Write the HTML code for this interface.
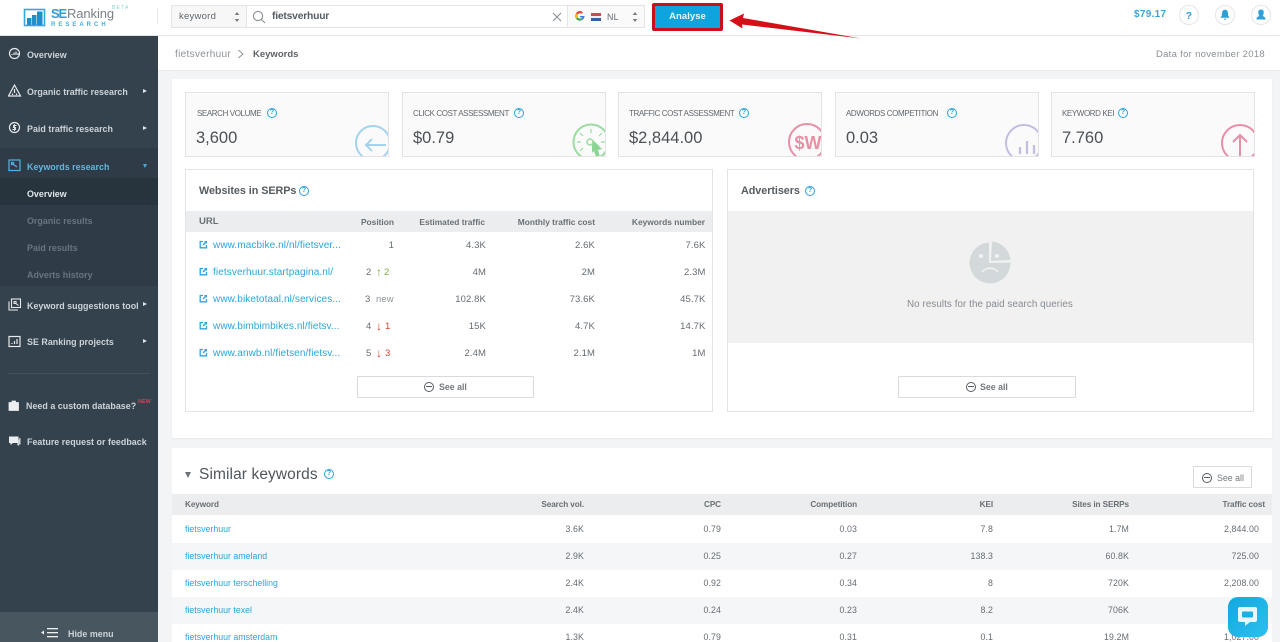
<!DOCTYPE html>
<html><head><meta charset="utf-8"><title>SE Ranking Research</title>
<style>
*{box-sizing:border-box}
html,body{margin:0;padding:0;width:1280px;height:642px;overflow:hidden;background:#f3f4f6;font-family:"Liberation Sans",sans-serif;color:#5a6268}
body{filter:blur(.3px)}
.a{position:absolute}
.t{position:absolute;white-space:nowrap;line-height:14px;letter-spacing:.25px;transform:translateY(1px)}
.r{text-align:right}
.side{left:0;top:36px;width:158px;height:606px;background:#34424e}
.n{font-size:8.9px;font-weight:bold;color:#cdd3d7;letter-spacing:.03px}
.sub{font-size:8.9px;font-weight:bold;color:#68757e;letter-spacing:.03px}
.tri{position:absolute;width:0;height:0;border-left:4px solid #dfe3e6;border-top:2.5px solid transparent;border-bottom:2.5px solid transparent;left:143px}
.card{position:absolute;top:92px;width:204px;height:65px;background:#fafafa;border:1px solid #e1e3e5;overflow:hidden}
.lab{font-size:8px;color:#62686e;letter-spacing:-.4px;left:10px;top:13px}
.val{font-size:16.5px;color:#4a5157;left:10px;top:37px;line-height:16px;letter-spacing:0;transform:none}
.q{position:absolute;width:10px;height:10px;border:1.2px solid #2aa3dc;border-radius:50%;color:#2aa3dc;font-size:7px;line-height:8px;text-align:center;font-weight:bold}
.panel{position:absolute;top:169px;height:243px;background:#fff;border:1px solid #e1e3e5}
.h{font-size:10.8px;color:#555c62;font-weight:bold;letter-spacing:-.05px;transform:none}
.th{font-size:8.4px;font-weight:bold;color:#697075;letter-spacing:0}
.th2{font-size:8.2px;font-weight:bold;color:#697075;letter-spacing:-.1px;transform:none}
.td{font-size:9.5px;color:#666d73;letter-spacing:.1px}
.ar{font-size:12px;font-weight:bold;letter-spacing:0}
.l{font-size:10px;color:#2aa6dc;letter-spacing:.1px}
.k{font-size:8.8px;color:#2aa6dc;letter-spacing:0;transform:none}
.c{font-size:8.8px;color:#666d73;letter-spacing:.1px;transform:none}
.btn{position:absolute;background:#fff;border:1px solid #d8dadc;border-radius:1px}
.see{font-size:8.8px;font-weight:bold;color:#73797e;letter-spacing:0;transform:none}
.min{position:absolute;width:10px;height:10px;border:1.3px solid #555c62;border-radius:50%}
.min:after{content:"";position:absolute;left:1px;right:1px;top:3px;height:1.3px;background:#555c62}
.ext{position:absolute;width:9px;height:9px}
</style></head><body>

<!-- header -->
<div class="a" style="left:0;top:0;width:1280px;height:36px;background:#fff;border-bottom:1px solid #e4e6e8"></div>
<svg class="a" style="left:23px;top:8px" width="24" height="20" viewBox="0 0 24 20"><rect x="1.5" y="1.5" width="20" height="16" fill="#fff" stroke="#35a7df" stroke-width="1.6"/><rect x="4" y="10" width="4.5" height="7" fill="#1f8fcb"/><rect x="9" y="7" width="4.5" height="10" fill="#1f8fcb"/><rect x="14" y="3.5" width="5.5" height="13.5" fill="#1f8fcb"/></svg>
<div class="t" style="left:51px;top:6px;font-size:13px;font-weight:bold;color:#2d9dd6;letter-spacing:-1.2px">SE</div>
<div class="t" style="left:67px;top:6px;font-size:13px;color:#7b8187;letter-spacing:-.1px">Ranking</div>
<div class="t" style="left:51px;top:16.5px;font-size:6px;font-weight:bold;color:#3fb0e2;letter-spacing:3px">RESEARCH</div>
<div class="t" style="left:112px;top:0;font-size:5px;color:#7fd7d2;letter-spacing:1.2px">BETA</div>
<div class="a" style="left:157px;top:8px;width:1px;height:16px;background:#e8e9ea"></div>

<div class="a" style="left:171px;top:5px;width:76px;height:23px;background:#f7f7f7;border:1px solid #e3e4e5"></div>
<div class="t" style="left:179px;top:9px;font-size:9.5px;color:#5f666c">keyword</div>
<svg class="a" style="left:234px;top:12px" width="6" height="10"><path d="M3 0L5.2 3H.8zM3 10L.8 7H5.2z" fill="#72787d"/></svg>
<div class="a" style="left:246px;top:5px;width:322px;height:23px;background:#fff;border:1px solid #e3e4e5"></div>
<svg class="a" style="left:252px;top:10px" width="14" height="14" fill="none" stroke="#8a9096" stroke-width="1.1"><circle cx="6" cy="6" r="4.6"/><path d="M9.4 9.4L13 13"/></svg>
<div class="t" style="left:272px;top:9px;font-size:10.3px;color:#555b61;font-weight:bold;letter-spacing:-.2px">fietsverhuur</div>
<svg class="a" style="left:552px;top:12px" width="10" height="10" stroke="#8a8f94" stroke-width="1.1"><path d="M1 1L9 9M9 1L1 9"/></svg>
<div class="a" style="left:567px;top:5px;width:78px;height:23px;background:#fafafa;border:1px solid #e3e4e5"></div>
<svg class="a" style="left:575px;top:11px" width="10" height="10"><path d="M5 5H9.500A4.600 4.600 0 0 1 7.800 8.600L6 7A2.500 2.500 0 0 0 7 6.300H5z" fill="#3f80ee"/><path d="M1 2.2A4.4 4.4 0 0 1 8 1.4L6.6 2.8A2.5 2.5 0 0 0 2.8 3.6z" fill="#e6483b"/><path d="M1 2.2L2.8 3.6V6.4L1 7.8A4.6 4.6 0 0 1 1 2.2z" fill="#f4b71e"/><path d="M1 7.8L2.8 6.4A2.5 2.5 0 0 0 6 7.3L7.6 8.6A4.5 4.5 0 0 1 1 7.8z" fill="#3aa757"/></svg>
<div class="a" style="left:591px;top:13px;width:10px;height:2.6px;background:#d0494f"></div>
<div class="a" style="left:591px;top:15.6px;width:10px;height:2.6px;background:#eef0f2"></div>
<div class="a" style="left:591px;top:18.2px;width:10px;height:2.6px;background:#3d5da4"></div>
<div class="t" style="left:607px;top:9px;font-size:8.8px;color:#62686e">NL</div>
<svg class="a" style="left:632px;top:12px" width="6" height="10"><path d="M3 0L5.2 3H.8zM3 10L.8 7H5.2z" fill="#72787d"/></svg>

<div class="a" style="left:652px;top:3px;width:71px;height:28px;background:#cb0e1a;border-radius:2px"></div>
<div class="a" style="left:655px;top:6px;width:65px;height:22px;background:#0ea5df"></div>
<div class="t" style="left:655px;top:9px;width:65px;text-align:center;font-size:9.5px;font-weight:bold;color:#e9f7fd;letter-spacing:.05px">Analyse</div>

<div class="t" style="left:1134px;top:7px;font-size:10px;font-weight:bold;color:#35a5dc;letter-spacing:.3px">$79.17</div>
<div class="a" style="left:1179px;top:5px;width:20px;height:20px;border:1px solid #e3e5e7;border-radius:50%"></div>
<div class="t" style="left:1179px;top:8px;width:20px;text-align:center;font-size:10.5px;font-weight:bold;color:#2d9fd9">?</div>
<div class="a" style="left:1215px;top:5px;width:20px;height:20px;border:1px solid #e3e5e7;border-radius:50%"></div>
<svg class="a" style="left:1220px;top:9px" width="10" height="12"><path d="M5 .8C7.500 .8 8 3 8 5C8 7 9 8 9.500 8.800H.5C1 8 2 7 2 5C2 3 2.500 .8 5 .8zM3.800 9.600H6.200A1.200 1.200 0 0 1 3.800 9.600z" fill="#2d9fd9"/></svg>
<div class="a" style="left:1251px;top:5px;width:20px;height:20px;border:1px solid #e3e5e7;border-radius:50%"></div>
<svg class="a" style="left:1256px;top:9px" width="10" height="12"><path d="M5 .5A2.700 2.700 0 0 1 7.500 4.500C7.500 6 7 6.500 6.500 7C8 7.500 9.500 8 9.500 10.500H.5C.5 8 2 7.500 3.500 7C3 6.500 2.500 6 2.500 4.500A2.700 2.700 0 0 1 5 .5z" fill="#2d9fd9"/></svg>

<!-- subheader -->
<div class="a" style="left:158px;top:36px;width:1122px;height:35px;background:#fff;border-bottom:1px solid #e8e9eb"></div>
<div class="t" style="left:175px;top:47px;font-size:10px;color:#8b9196;letter-spacing:.32px">fietsverhuur</div>
<svg class="a" style="left:237px;top:49px" width="8" height="10" fill="none" stroke="#8b9196" stroke-width="1"><path d="M1.500 1L6 5L1.500 9"/></svg>
<div class="t" style="left:253px;top:47px;font-size:9.5px;font-weight:bold;color:#5c6369;letter-spacing:0">Keywords</div>
<div class="t r" style="right:15px;top:47px;font-size:9.5px;color:#8b9196;letter-spacing:.3px">Data for november 2018</div>

<!-- sidebar -->
<div class="a side"></div>
<div class="a" style="left:0;top:148px;width:158px;height:138px;background:#2f3c47"></div>
<div class="a" style="left:0;top:178px;width:158px;height:27px;background:#28343d"></div>
<div class="a" style="left:8px;top:373px;width:142px;height:1px;background:#43515c"></div>
<div class="a" style="left:0;top:612px;width:158px;height:30px;background:#48565f"></div>

<svg class="a" style="left:8px;top:47px" width="14" height="14" fill="none" stroke="#e6e9eb" stroke-width="1.200"><circle cx="6.500" cy="6.500" r="5"/><path d="M4 8V7M6 8V5.500M8 8V4.500M10 8V6"/></svg>
<svg class="a" style="left:8px;top:84px" width="14" height="14" fill="none" stroke="#e6e9eb" stroke-width="1.200"><path d="M6.500 1L12.500 12H.5z"/><path d="M6.500 5V9M4.500 9.500V11M8.500 9.500V11"/></svg>
<svg class="a" style="left:8px;top:121px" width="14" height="14" fill="none" stroke="#e6e9eb" stroke-width="1.200"><circle cx="6.500" cy="6.500" r="5"/><path d="M8.500 4.500H5.500V6.500H7.500V8.500H4.500M6.500 3V10" stroke-width=".9"/></svg>
<svg class="a" style="left:8px;top:159px" width="14" height="14" fill="none" stroke="#4fb4e2" stroke-width="1.200"><rect x="1" y="1" width="11" height="10.500"/><path d="M3.500 3.500h2v2h-2zM5.500 5.500L9 8"/></svg>
<svg class="a" style="left:8px;top:298px" width="14" height="14" fill="none" stroke="#e6e9eb" stroke-width="1.100"><rect x="3.500" y="1" width="9" height="8.500"/><path d="M1 3.500V12H10"/><path d="M6 3.500h2v2h-2zM8 5.500L10.500 7.500"/></svg>
<svg class="a" style="left:8px;top:335px" width="14" height="14" fill="none" stroke="#e6e9eb" stroke-width="1.200"><rect x="1" y="1.500" width="11" height="10"/><path d="M4 9V8M6.500 9V6M9 9V4"/></svg>
<svg class="a" style="left:8px;top:399px" width="12" height="12"><path d="M1 3.500H10.500V11.500H1zM4 3.500V2H7.500V3.500" fill="#eceff1" stroke="#eceff1" stroke-width=".8"/></svg>
<svg class="a" style="left:8px;top:435px" width="13" height="12"><path d="M1 1.500H10.500V8H5L2.500 10V8H1z" fill="#eceff1"/><path d="M11.500 3H12.500V9.500H11V11L9 9.500" fill="#cfd5d9"/></svg>

<div class="t n" style="left:27px;top:47px">Overview</div>
<div class="t n" style="left:27px;top:84px">Organic traffic research</div><div class="tri" style="top:89px"></div>
<div class="t n" style="left:27px;top:121px">Paid traffic research</div><div class="tri" style="top:126px"></div>
<div class="t n" style="left:27px;top:159px;color:#63b6de">Keywords research</div>
<div class="a" style="left:143px;top:164px;border-top:4px solid #4fa8d6;border-left:2.500px solid transparent;border-right:2.500px solid transparent;width:0;height:0"></div>
<div class="t n" style="left:27px;top:186px;color:#e2e6e8">Overview</div>
<div class="t sub" style="left:27px;top:213px">Organic results</div>
<div class="t sub" style="left:27px;top:240px">Paid results</div>
<div class="t sub" style="left:27px;top:267px">Adverts history</div>
<div class="t n" style="left:27px;top:298px">Keyword suggestions tool</div><div class="tri" style="top:302px"></div>
<div class="t n" style="left:27px;top:334px">SE Ranking projects</div><div class="tri" style="top:339px"></div>
<div class="t n" style="left:26px;top:398px">Need a custom database?</div>
<div class="t" style="left:138px;top:394px;font-size:5.500px;font-weight:bold;color:#d8405a;letter-spacing:0">NEW</div>
<div class="t n" style="left:27px;top:434px">Feature request or feedback</div>
<div class="t n" style="left:68px;top:626px">Hide menu</div>
<svg class="a" style="left:40px;top:628px" width="20" height="10" fill="#eef0f1"><path d="M4 2.500V6.500L1 4.500z"/><rect x="7" y="0" width="11" height="1.300"/><rect x="7" y="4" width="11" height="1.300"/><rect x="7" y="8" width="11" height="1.300"/></svg>

<!-- top panel -->
<div class="a" style="left:172px;top:79px;width:1100px;height:359px;background:#fff;box-shadow:0 1px 1px #e6e7e9"></div>

<div class="card" style="left:185px">
 <div class="t lab" style="left:11px">SEARCH VOLUME</div><div class="q" style="left:81px;top:15px">?</div><div class="t val">3,600</div>
 <svg class="a" style="left:165px;top:28px" width="38" height="36" fill="none" stroke="#a5d3ee" stroke-width="2"><circle cx="22" cy="22" r="17"/><path d="M35 24H15M21 18L15 24L21 30"/></svg>
</div>
<div class="card" style="left:402px">
 <div class="t lab">CLICK COST ASSESSMENT</div><div class="q" style="left:111px;top:15px">?</div><div class="t val">$0.79</div>
 <svg class="a" style="left:165px;top:28px" width="38" height="36" fill="none" stroke="#9bdca0" stroke-width="2"><circle cx="23" cy="21" r="17.500"/><path d="M23 8V12M12 12L15 15M9 21H13M33 21H37M34 12L31 15M12 30L15 27" stroke-width="1.200"/><path d="M24 18L34 28L30 29L32 36H28L26 30L24 32z" fill="#8cd494" stroke="none"/><circle cx="22" cy="21" r="3" stroke-width="1.500"/></svg>
</div>
<div class="card" style="left:618px">
 <div class="t lab">TRAFFIC COST ASSESSMENT</div><div class="q" style="left:120px;top:15px">?</div><div class="t val">$2,844.00</div>
 <svg class="a" style="left:165px;top:28px" width="38" height="36" fill="none" stroke="#e88fa6" stroke-width="2"><circle cx="23" cy="21" r="18"/><text x="10.500" y="28" font-family="Liberation Sans" font-size="18" font-weight="bold" fill="#e88fa6" stroke="none">$W</text></svg>
</div>
<div class="card" style="left:835px">
 <div class="t lab">ADWORDS COMPETITION</div><div class="q" style="left:111px;top:15px">?</div><div class="t val">0.03</div>
 <svg class="a" style="left:165px;top:28px" width="38" height="36" fill="none" stroke="#c4bce2" stroke-width="2"><circle cx="23" cy="22" r="18"/><path d="M19 33V26M26 33V20M33 33V24" stroke-width="2.200"/></svg>
</div>
<div class="card" style="left:1051px">
 <div class="t lab">KEYWORD KEI</div><div class="q" style="left:66px;top:15px">?</div><div class="t val">7.760</div>
 <svg class="a" style="left:165px;top:28px" width="38" height="36" fill="none" stroke="#e88fa6" stroke-width="2"><circle cx="23" cy="22" r="18"/><path d="M23 36V14M16 21L23 14L30 21"/></svg>
</div>

<!-- websites -->
<div class="panel" style="left:185px;width:528px"></div>
<div class="t h" style="left:199px;top:184px">Websites in SERPs</div><div class="q" style="left:299px;top:186px">?</div>
<div class="a" style="left:186px;top:211px;width:526px;height:21px;background:#ebedee"></div>
<div class="t th" style="left:199px;top:214px;font-size:9.500px">URL</div>
<div class="t th r" style="right:886px;top:214px">Position</div>
<div class="t th r" style="right:795px;top:214px">Estimated traffic</div>
<div class="t th r" style="right:685px;top:214px">Monthly traffic cost</div>
<div class="t th r" style="right:575px;top:214px">Keywords number</div>

<svg width="0" height="0" style="position:absolute"><defs><symbol id="e" viewBox="0 0 9 9"><path d="M4 1.500H1.200V7.800H7.500V5" fill="none" stroke="#2aa6dc" stroke-width="1.300"/><path d="M5 1H8V4L7 3L4.500 5.500L3.500 4.500L6 2z" fill="#2aa6dc"/></symbol></defs></svg>

<svg class="ext" style="left:199px;top:240px"><use href="#e"/></svg><div class="t l" style="left:213px;top:238px">www.macbike.nl/nl/fietsver...</div>
<div class="t td r" style="right:886px;top:238px">1</div><div class="t td r" style="right:574.5px;top:238px">7.6K</div><div class="t td r" style="right:794px;top:238px">4.3K</div><div class="t td r" style="right:685px;top:238px">2.6K</div>

<svg class="ext" style="left:199px;top:267px"><use href="#e"/></svg><div class="t l" style="left:213px;top:265px">fietsverhuur.startpagina.nl/</div>
<div class="t td" style="left:366px;top:265px">2</div><div class="t td ar" style="left:376px;top:264px;color:#79ac43">&#8593;</div><div class="t td" style="left:384px;top:265px;color:#79ac43">2</div>
<div class="t td r" style="right:794px;top:265px">4M</div><div class="t td r" style="right:685px;top:265px">2M</div><div class="t td r" style="right:574.500px;top:265px">2.3M</div>

<svg class="ext" style="left:199px;top:294px"><use href="#e"/></svg><div class="t l" style="left:213px;top:292px">www.biketotaal.nl/services...</div>
<div class="t td" style="left:365px;top:292px">3</div><div class="t td" style="left:376px;top:292px;color:#8f9599">new</div>
<div class="t td r" style="right:794px;top:292px">102.8K</div><div class="t td r" style="right:685px;top:292px">73.6K</div><div class="t td r" style="right:574.500px;top:292px">45.7K</div>

<svg class="ext" style="left:199px;top:321px"><use href="#e"/></svg><div class="t l" style="left:213px;top:319px">www.bimbimbikes.nl/fietsv...</div>
<div class="t td" style="left:366px;top:319px">4</div><div class="t td ar" style="left:376px;top:318px;color:#d5432f">&#8595;</div><div class="t td" style="left:385px;top:319px;color:#d5432f">1</div>
<div class="t td r" style="right:794px;top:319px">15K</div><div class="t td r" style="right:685px;top:319px">4.7K</div><div class="t td r" style="right:574.500px;top:319px">14.7K</div>

<svg class="ext" style="left:199px;top:348px"><use href="#e"/></svg><div class="t l" style="left:213px;top:346px">www.anwb.nl/fietsen/fietsv...</div>
<div class="t td" style="left:366px;top:346px">5</div><div class="t td ar" style="left:376px;top:345px;color:#d5432f">&#8595;</div><div class="t td" style="left:385px;top:346px;color:#d5432f">3</div>
<div class="t td r" style="right:794px;top:346px">2.4M</div><div class="t td r" style="right:685px;top:346px">2.1M</div><div class="t td r" style="right:574.500px;top:346px">1M</div>

<div class="btn" style="left:357px;top:376px;width:177px;height:22px"></div>
<div class="min" style="left:424px;top:382px"></div><div class="t see" style="left:439px;top:380px">See all</div>

<!-- advertisers -->
<div class="panel" style="left:727px;width:527px"></div>
<div class="t h" style="left:741px;top:184px">Advertisers</div><div class="q" style="left:805px;top:186px">?</div>
<div class="a" style="left:728px;top:211px;width:525px;height:132px;background:#f1f1f2"></div>
<svg class="a" style="left:968px;top:240px" width="44" height="44"><path d="M21 2.500A20.500 20.500 0 1 0 42.500 22.500L21 23z" fill="#d3d9da"/><path d="M24 1.500A20.500 20.500 0 0 1 42.500 20L23 21z" fill="#d3d9da"/><circle cx="13" cy="16" r="2" fill="#f1f1f2"/><circle cx="29" cy="16" r="2" fill="#f1f1f2"/><path d="M14 32C18 27 26 27 30 32" fill="none" stroke="#f1f1f2" stroke-width="1.500"/></svg>
<div class="t" style="left:907px;top:297px;font-size:9.800px;color:#858b90;letter-spacing:.08px">No results for the paid search queries</div>
<div class="btn" style="left:898px;top:376px;width:178px;height:22px"></div>
<div class="min" style="left:966px;top:382px"></div><div class="t see" style="left:980px;top:380px">See all</div>

<!-- similar keywords -->
<div class="a" style="left:172px;top:448px;width:1100px;height:194px;background:#fff"></div>
<div class="a" style="left:185px;top:472px;border-top:6px solid #6d7479;border-left:3.500px solid transparent;border-right:3.500px solid transparent;width:0;height:0"></div>
<div class="t" style="left:199px;top:467px;font-size:15.500px;color:#4f575d;letter-spacing:.1px">Similar keywords</div>
<div class="q" style="left:324px;top:469px">?</div>
<div class="btn" style="left:1193px;top:466px;width:59px;height:22px"></div>
<div class="min" style="left:1202px;top:473px"></div><div class="t see" style="left:1217px;top:471px;font-weight:normal">See all</div>

<div class="a" style="left:172px;top:494px;width:1100px;height:21px;background:#ebedee"></div>
<div class="a" style="left:172px;top:543px;width:1100px;height:27px;background:#f5f6f8"></div>
<div class="a" style="left:172px;top:597px;width:1100px;height:27px;background:#f5f6f8"></div>
<div class="t th2" style="left:185px;top:498px">Keyword</div>
<div class="t th2 r" style="right:696px;top:498px">Search vol.</div>
<div class="t th2 r" style="right:559px;top:498px">CPC</div>
<div class="t th2 r" style="right:423px;top:498px">Competition</div>
<div class="t th2 r" style="right:287px;top:498px">KEI</div>
<div class="t th2 r" style="right:151px;top:498px">Sites in SERPs</div>
<div class="t th2 r" style="right:15px;top:498px">Traffic cost</div>

<div class="t k" style="left:185px;top:522px">fietsverhuur</div><div class="t c r" style="right:696px;top:522px">3.6K</div><div class="t c r" style="right:559px;top:522px">0.79</div><div class="t c r" style="right:423px;top:522px">0.03</div><div class="t c r" style="right:287px;top:522px">7.8</div><div class="t c r" style="right:151px;top:522px">1.7M</div><div class="t c r" style="right:21px;top:522px">2,844.00</div>
<div class="t k" style="left:185px;top:549px">fietsverhuur ameland</div><div class="t c r" style="right:696px;top:549px">2.9K</div><div class="t c r" style="right:559px;top:549px">0.25</div><div class="t c r" style="right:423px;top:549px">0.27</div><div class="t c r" style="right:287px;top:549px">138.3</div><div class="t c r" style="right:151px;top:549px">60.8K</div><div class="t c r" style="right:21px;top:549px">725.00</div>
<div class="t k" style="left:185px;top:576px">fietsverhuur terschelling</div><div class="t c r" style="right:696px;top:576px">2.4K</div><div class="t c r" style="right:559px;top:576px">0.92</div><div class="t c r" style="right:423px;top:576px">0.34</div><div class="t c r" style="right:287px;top:576px">8</div><div class="t c r" style="right:151px;top:576px">720K</div><div class="t c r" style="right:21px;top:576px">2,208.00</div>
<div class="t k" style="left:185px;top:603px">fietsverhuur texel</div><div class="t c r" style="right:696px;top:603px">2.4K</div><div class="t c r" style="right:559px;top:603px">0.24</div><div class="t c r" style="right:423px;top:603px">0.23</div><div class="t c r" style="right:287px;top:603px">8.2</div><div class="t c r" style="right:151px;top:603px">706K</div>
<div class="t k" style="left:185px;top:630px">fietsverhuur amsterdam</div><div class="t c r" style="right:696px;top:630px">1.3K</div><div class="t c r" style="right:559px;top:630px">0.79</div><div class="t c r" style="right:423px;top:630px">0.31</div><div class="t c r" style="right:287px;top:630px">0.1</div><div class="t c r" style="right:151px;top:630px">19.2M</div><div class="t c r" style="right:21px;top:630px">1,027.00</div>

<!-- chat -->
<div class="a" style="left:1228px;top:597px;width:40px;height:40px;border-radius:10px;background:linear-gradient(135deg,#12a8e0,#2cc0ec)"></div>
<svg class="a" style="left:1237px;top:606px" width="22" height="22"><path d="M3 1H18A2 2 0 0 1 20 3V14A2 2 0 0 1 18 16H13L8 20V16H3A2 2 0 0 1 1 14V3A2 2 0 0 1 3 1z" fill="#e6f7fd"/><rect x="5" y="5.500" width="11" height="6" rx="1" fill="#1cb0e4"/></svg>

<!-- annotation arrow -->
<svg class="a" style="left:725px;top:10px" width="140" height="32"><path d="M4.5 10.5L19 3.500L18 8L136 28.500L17 14.500L17.500 18.500z" fill="#d50f17"/></svg>
</body></html>
